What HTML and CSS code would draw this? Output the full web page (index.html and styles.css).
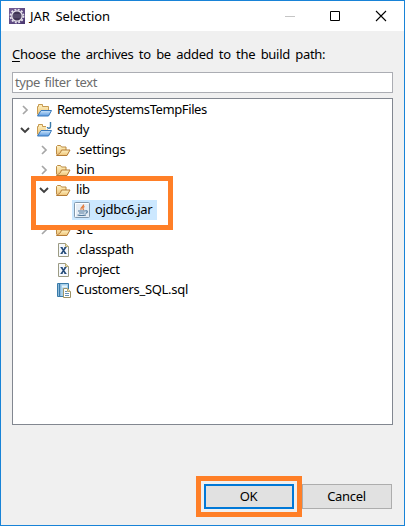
FILE: index.html
```html
<!DOCTYPE html>
<html lang="en">
<head>
<meta charset="utf-8">
<title>JAR Selection</title>
<link rel="stylesheet" href="styles.css">
</head>
<body>
<svg class="defs" width="0" height="0">
  <defs>
    <linearGradient id="gold" x1="0" y1="0" x2="0" y2="1"><stop offset="0" stop-color="#fff3c4"/><stop offset="1" stop-color="#eec377"/></linearGradient>
    <linearGradient id="blue" x1="0" y1="0" x2="0" y2="1"><stop offset="0" stop-color="#cfe6fa"/><stop offset="1" stop-color="#5b9ae0"/></linearGradient>
    <linearGradient id="violet" x1="0" y1="0" x2="1" y2="1"><stop offset="0" stop-color="#776099"/><stop offset="1" stop-color="#49366f"/></linearGradient>
  </defs>
  <symbol id="closed" viewBox="0 0 16 16"><path d="M6 4l4 4-4 4" fill="none" stroke="#a6a6a6" stroke-width="1.7"/></symbol>
  <symbol id="open" viewBox="0 0 16 16"><path d="M4 6l4 4 4-4" fill="none" stroke="#404040" stroke-width="1.9"/></symbol>
  <symbol id="folder" viewBox="0 0 16 16">
    <path d="M1.500 12.500v-8l1-1h3l1 1.500h4.500v3" fill="url(#gold)" stroke="#bd8b43"/>
    <path d="M1.500 13.500l4-3 1-2.500h8.500l-3 5.500z" fill="url(#gold)" stroke="#b47b35"/>
  </symbol>
  <symbol id="project" viewBox="0 0 16 16">
    <path d="M1.500 12.500v-8h1v-2h4v2h6v4" fill="url(#gold)" stroke="#c69a51"/>
    <path d="M1.500 14l3.500-5.500h10.500l-3 5.500z" fill="url(#blue)" stroke="#3879bd"/>
  </symbol>
  <symbol id="java" viewBox="0 0 16 16">
    <path d="M1.500 12.500v-8h1v-2h4v2h5v4" fill="url(#gold)" stroke="#c69a51"/>
    <path d="M1.500 14l3.500-5.500h10.500l-3 5.500z" fill="url(#blue)" stroke="#3879bd"/>
    <path d="M10 0h6v7.500h-6z" fill="#fff"/>
    <path d="M14.500 0v4.500q0 1.800-1.500 1.800t-1.700-1.300" fill="none" stroke="#3b79a8" stroke-width="1.400"/>
  </symbol>
  <symbol id="jar" viewBox="0 0 16 16">
    <rect x=".5" y=".5" width="15" height="15" rx="1" fill="#e5edf5" stroke="#8298ac"/>
    <path d="M1.500 14.500v-13h13" fill="none" stroke="#fff"/>
    <path d="M9.500 2.500c1 2-4 2.500-2.500 5.500M10.500 4.500c-2 1-2 2-.7 3.500" fill="none" stroke="#e37b3c" stroke-width="1.300"/>
    <path d="M4 9h7M5 11h5.500M3.500 13q4 1 8.500 0M11 9c3-1 3 1.500.5 2.500" fill="none" stroke="#537b9d" stroke-width="1.200"/>
  </symbol>
  <symbol id="xml" viewBox="0 0 16 16">
    <path d="M2.500 1.500h7l3 3v10h-10z" fill="#f5f8fc" stroke="#9c9b83"/>
    <path d="M9.500 1.500v3h3" fill="#eadca8" stroke="#b5a875"/>
    <path d="M5.500 5.500l4 6M9.500 5.500l-4 6" stroke="#244a78" stroke-width="1.500"/>
    <path d="M4.500 5.500h2M8.500 5.500h2M4.500 11.500h2M8.500 11.500h2" stroke="#244a78"/>
  </symbol>
  <symbol id="sql" viewBox="0 0 16 16">
    <path d="M1.500 1.500h11v13h-11z" fill="#a8d0ea" stroke="#397ba9"/>
    <path d="M3.500 1.500v13" stroke="#397ba9" stroke-width="1.500"/>
    <path d="M6 3.500h5v2H6z" fill="#e5f4fc"/>
    <path d="M7.500 6.500h4l3 3v6h-7z" fill="#fff" stroke="#9d9366"/>
    <path d="M11.500 6.500v3h3" fill="#eee2ad" stroke="#b5a875"/>
    <path d="M9 9.500h2M9 11.500h4M9 13.500h4" stroke="#6792b5"/>
  </symbol>
</svg>
<main class="window">
  <header class="titlebar">
    <svg class="app-icon" viewBox="0 0 16 16">
      <path d="M0 0h16v16H0z" fill="url(#violet)"/>
      <circle cx="8" cy="8" r="6.500" fill="none" stroke="#e7e3ec" stroke-width="1.800" stroke-dasharray="1.900 1.503"/>
      <circle cx="8" cy="8" r="5.200" fill="#403455" stroke="#e7e3ec" stroke-width="1.300"/>
      <path d="M4 7h8M4 9h8" stroke="#75698b" stroke-width=".8"/>
    </svg>
    <h1 class="title">JAR Selection</h1>
    <svg class="controls" viewBox="0 0 104 12">
      <path d="M0 6.500h10" stroke="#c5c5c5"/>
      <path d="M45.500 1.500h9v9h-9z" fill="none" stroke="#000"/>
      <path d="M91 1l10 10M101 1L91 11" stroke="#000" stroke-width="1.100"/>
    </svg>
  </header>
  <section class="content">
    <p class="prompt"><u>C</u>hoose the archives to be added to the build path:</p>
    <div class="filter">type filter text</div>
    <ul class="tree">
      <li class="row"><svg><use href="#closed"/></svg><svg><use href="#project"/></svg><span class="remote">RemoteSystemsTempFiles</span></li>
      <li class="row"><svg><use href="#open"/></svg><svg><use href="#java"/></svg><span>study</span></li>
      <li class="row child"><svg><use href="#closed"/></svg><svg><use href="#folder"/></svg><span>.settings</span></li>
      <li class="row child"><svg><use href="#closed"/></svg><svg><use href="#folder"/></svg><span>bin</span></li>
      <li class="row child"><svg><use href="#open"/></svg><svg><use href="#folder"/></svg><span>lib</span></li>
      <li class="row grandchild"><div class="selected"><svg><use href="#jar"/></svg><span>ojdbc6.jar</span></div></li>
      <li class="row child"><svg><use href="#closed"/></svg><svg><use href="#folder"/></svg><span>src</span></li>
      <li class="row file"><svg><use href="#xml"/></svg><span>.classpath</span></li>
      <li class="row file"><svg><use href="#xml"/></svg><span>.project</span></li>
      <li class="row file"><svg><use href="#sql"/></svg><span>Customers_SQL.sql</span></li>
    </ul>
    <footer class="actions"><button class="ok">OK</button><button class="cancel">Cancel</button></footer>
  </section>
  <div class="highlight highlight-lib"></div>
  <div class="highlight highlight-ok"></div>
</main>
</body>
</html>
```
FILE: styles.css
```css
* { box-sizing: border-box; }
body { margin: 0; font: 13px/20px "Noto Sans", sans-serif; color: #000; }
.defs { position: absolute; }
.window { position: relative; width: 405px; height: 526px; border: 1px solid #1883d7; background: #f0f0f0; }
.titlebar { display: flex; align-items: center; height: 30px; padding-left: 8px; padding-right: 15px; background: #fff; }
.app-icon { width: 16px; height: 16px; }
.title { margin: 0 auto 0 5px; padding-bottom: 1px; font-size: 13px; font-weight: 400; letter-spacing: -.1px; word-spacing: 2.5px; }
.controls { width: 104px; height: 12px; }
.content { padding: 13px 11px 0; }
.prompt { margin: 0 0 8px; letter-spacing: -.3px; word-spacing: 2.3px; white-space: nowrap; }
.prompt u { text-underline-offset: 2px; text-decoration-skip-ink: none; }
.filter { width: 381px; height: 21px; padding-left: 2px; border: 1px solid #abadb3; background: #fff; color: #6d6d6d; line-height: 19px; letter-spacing: -.4px; word-spacing: 1.500px; }
.tree { list-style: none; width: 381px; height: 327px; margin: 5px 0 0; padding: 1px 0 0 4px; border: 1px solid #828790; background: #fff; letter-spacing: -.3px; }
.row { display: flex; align-items: center; height: 20px; white-space: nowrap; }
.row svg { width: 16px; height: 16px; flex: none; }
.row > svg + svg { margin-left: 3px; }
.row span { margin-left: 5px; padding-bottom: 2px; }
.remote { letter-spacing: -.4px; }
.child { padding-left: 19px; }
.grandchild { padding-left: 55px; }
.file { padding-left: 39px; }
.row.file span { margin-left: 4px; }
.selected { display: flex; align-items: center; width: 85px; height: 20px; padding-left: 2px; background: #cce8ff; }
.actions { display: flex; gap: 8px; margin-top: 59px; padding-left: 192px; }
.actions button { width: 90px; height: 25px; padding: 0 1px 1px 0; border: 1px solid #adadad; background: #e1e1e1; font: inherit; letter-spacing: -.3px; color: #000; }
.actions .ok { border: 2px solid #0078d7; }
.highlight { position: absolute; border: 5px solid #ff7f27; pointer-events: none; }
.highlight-lib { left: 30px; top: 175px; width: 142px; height: 54px; }
.highlight-ok { left: 195px; top: 475px; width: 106px; height: 41px; }
```
